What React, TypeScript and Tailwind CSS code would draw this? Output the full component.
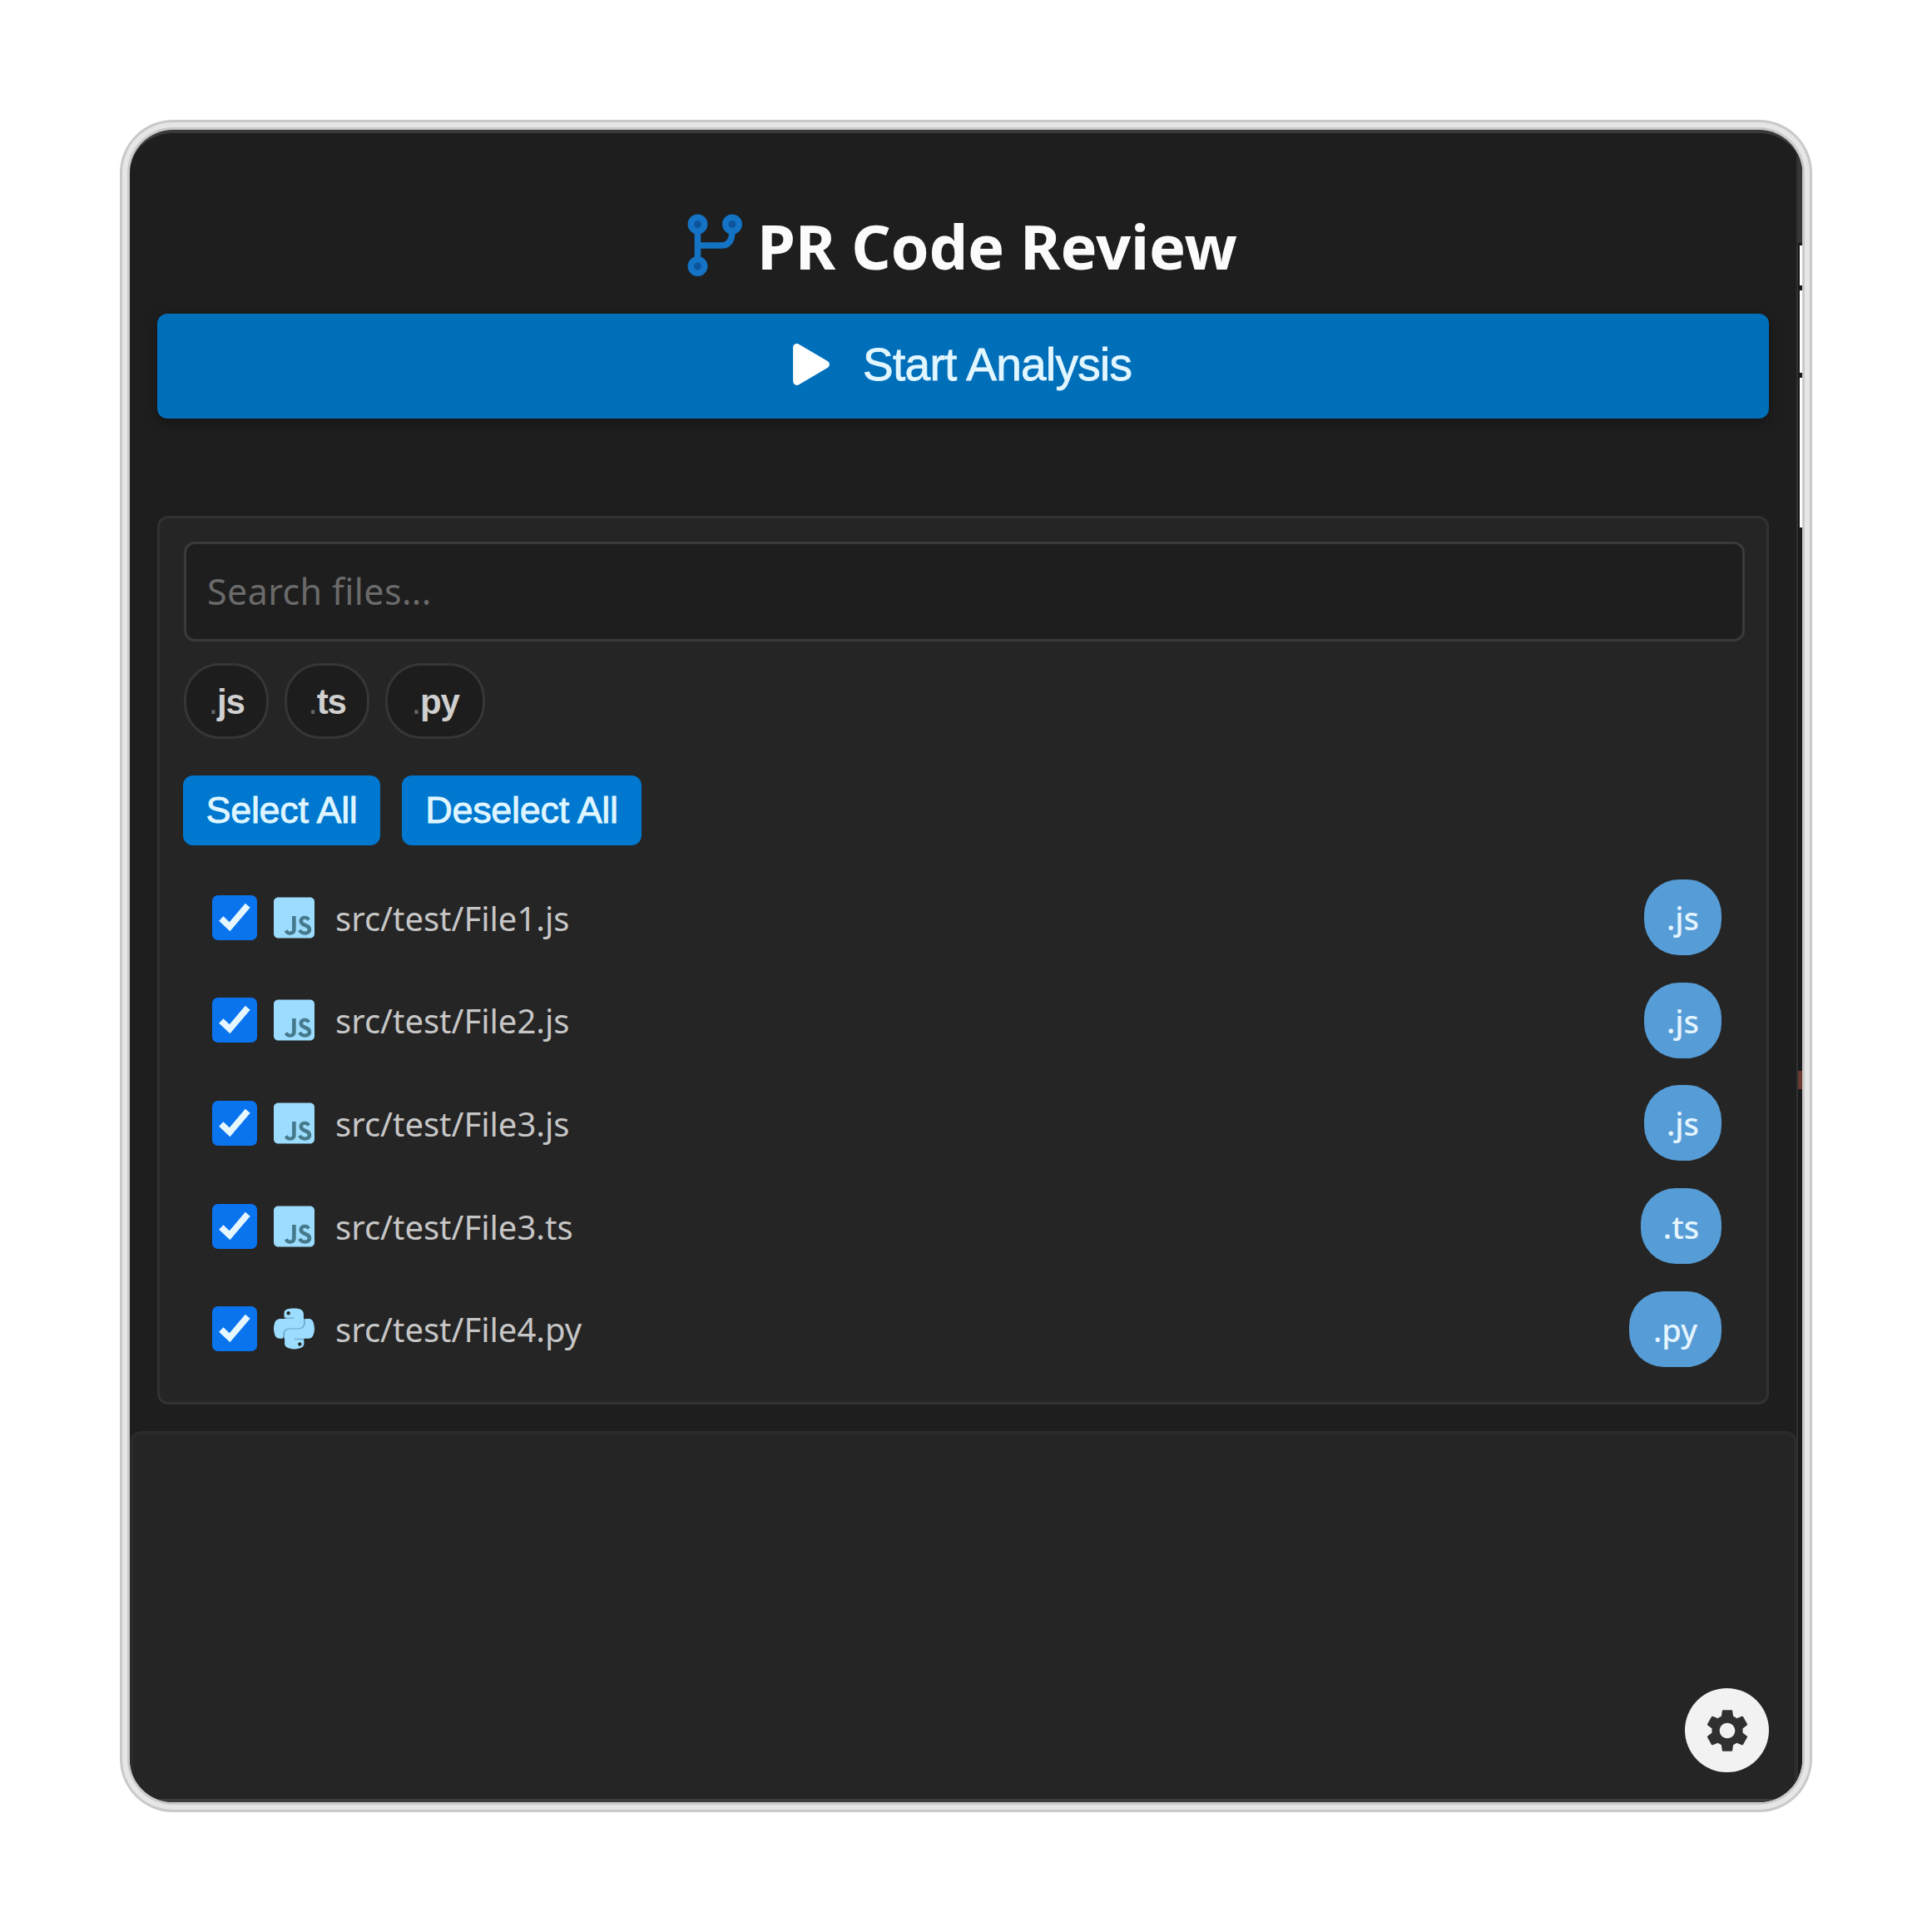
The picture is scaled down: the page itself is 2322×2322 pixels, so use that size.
import React from "react";
import { FaPlay, FaJsSquare, FaPython } from "react-icons/fa";
import { MdSettings } from "react-icons/md";

type FileRow = { path: string; ext: string };

const files: FileRow[] = [
  { path: "src/test/File1.js", ext: ".js" },
  { path: "src/test/File2.js", ext: ".js" },
  { path: "src/test/File3.js", ext: ".js" },
  { path: "src/test/File3.ts", ext: ".ts" },
  { path: "src/test/File4.py", ext: ".py" },
];

const chipWidths: Record<string, string> = {
  ".js": "w-[102px]",
  ".ts": "w-[102px]",
  ".py": "w-[120px]",
};

const badgeWidths: Record<string, string> = {
  ".js": "w-[93px]",
  ".ts": "w-[97px]",
  ".py": "w-[111px]",
};

function BranchIcon() {
  return (
    <svg viewBox="0 0 66 76" className="h-[76px] w-[66px] shrink-0" fill="none" stroke="#1473c4" strokeWidth="7.5">
      <circle cx="12.5" cy="12.5" r="8.2" fill="#0c559c" />
      <circle cx="54" cy="12.5" r="8.2" fill="#0c559c" />
      <circle cx="12.5" cy="63" r="8.2" fill="#0c559c" />
      <path d="M12.5 20.5V55M54 20.5C54 31 50.500 38 41 38H12.500" />
    </svg>
  );
}

function Header() {
  return (
    <header className="flex h-[221px] items-start pl-[670px] pt-[101px]">
      <BranchIcon />
      <h1 className="ml-[18px] whitespace-nowrap font-['Noto_Sans'] text-[74px] font-bold leading-[78px] tracking-[-0.2px] text-[#fbfbfb]">
        PR Code Review
      </h1>
    </header>
  );
}

function StartButton() {
  return (
    <button className="mx-[33px] flex h-[126px] w-[1937px] items-center rounded-[12px] bg-[#006fba] pb-[5px] pl-[764px] shadow-[0_4px_14px_rgba(0,0,0,0.35)]">
      <FaPlay className="h-[50px] w-[44px] text-white" />
      <span className="ml-[40px] whitespace-nowrap font-['Liberation_Sans'] text-[55px] leading-[60px] tracking-[-0.7px] text-[#e2f6ff] [-webkit-text-stroke:0.8px_#e2f6ff]">
        Start Analysis
      </span>
    </button>
  );
}

function FilterChip({ label }: { label: string }) {
  return (
    <span
      className={`${chipWidths[label]} flex h-[91px] items-center justify-center rounded-[43px] border-[3px] border-[#363634] bg-[#1d1d1d] pt-[2px] font-['Liberation_Sans'] text-[42px] font-bold tracking-[-1.2px] text-[#d0d0d0]`}
    >
      <span className="font-normal text-[#66666a]">.</span>
      {label.slice(1)}
    </span>
  );
}

function Checkbox() {
  return (
    <span className="flex size-[54px] shrink-0 items-center justify-center rounded-[7px] bg-[#0a74ef]">
      <svg viewBox="0 0 55 55" className="size-[54px]" fill="none">
        <path d="M11 28.5 L21.500 38.500 L43.500 12.500" stroke="#e6f7ff" strokeWidth="7.8" />
      </svg>
    </span>
  );
}

/* The backing square and disc tint the cut-out parts of each glyph. */
function LanguageIcon({ ext }: { ext: string }) {
  if (ext === ".py") {
    return (
      <span className="ml-[20px] flex size-[49px] shrink-0 items-center justify-center">
        <span className="flex size-[34px] items-center justify-center rounded-full bg-[#74b2d2]">
          <FaPython className="h-[56px] w-[49px] shrink-0 text-[#9cdcfe]" />
        </span>
      </span>
    );
  }
  return (
    <span className="ml-[20px] flex size-[49px] shrink-0 items-center justify-center">
      <span className="flex size-[46px] items-center justify-center bg-[#47798c]">
        <FaJsSquare className="h-[56px] w-[49px] shrink-0 text-[#9cdcfe]" />
      </span>
    </span>
  );
}

function FileItem({ file }: { file: FileRow }) {
  return (
    <li className="flex h-[123.6px] items-center pl-[63px] pr-[54px]">
      <Checkbox />
      <LanguageIcon ext={file.ext} />
      <span className="ml-[25px] grow whitespace-nowrap pt-[2px] font-['Noto_Sans'] text-[40px] leading-[54px] text-[#c6c6c6]">
        {file.path}
      </span>
      <span
        className={`${badgeWidths[file.ext]} flex h-[91px] items-center justify-center rounded-[42px] bg-[#569cd6] pt-[2px] font-['Noto_Sans'] text-[38px] font-medium text-[#e4f5ff]`}
      >
        {file.ext}
      </span>
    </li>
  );
}

function FilePanel() {
  return (
    <section className="mx-[33px] mt-[117px] h-[1068px] w-[1937px] rounded-[13px] border-[3px] border-[#323232] bg-[#252525]">
      <div className="ml-[29px] mt-[28px] flex h-[120px] w-[1876px] items-center rounded-[13px] border-[3px] border-[#3a3a3a] bg-[#1e1e1e] pl-[25px] font-['Noto_Sans'] text-[43px] tracking-[0.4px] text-[#6a6a6a]">
        Search files...
      </div>
      <div className="ml-[29px] mt-[26px] flex gap-[19px]">
        {[".js", ".ts", ".py"].map((ext) => (
          <FilterChip key={ext} label={ext} />
        ))}
      </div>
      <div className="ml-[28px] mt-[44px] flex gap-[26px] font-['Liberation_Sans'] text-[45px] tracking-[-0.3px] text-[#dff5ff] [-webkit-text-stroke:0.9px_#dff5ff]">
        <button className="h-[84px] w-[237px] whitespace-nowrap rounded-[12px] bg-[#0078d0]">Select All</button>
        <button className="h-[84px] w-[288px] whitespace-nowrap rounded-[12px] bg-[#0078d0]">Deselect All</button>
      </div>
      <ul className="mt-[25px]">
        {files.map((file) => (
          <FileItem key={file.path} file={file} />
        ))}
      </ul>
    </section>
  );
}

export default function App() {
  return (
    <main className="h-[2322px] w-[2322px] overflow-hidden bg-white p-[144px]">
      <div className="size-[2034px] rounded-[64px] bg-[#c9c9c9] p-[3px]">
        <div className="size-full rounded-[61px] bg-[#e6e6e6] p-[6px]">
          <div className="size-full rounded-[55px] bg-[#c9c9c9] p-[3px]">
            <div className="relative flex size-full flex-col overflow-hidden rounded-[52px] border-t-4 border-[#3a3a3a] bg-[#1e1e1e]">
              <div className="-mt-1 flex grow flex-col">
                <Header />
                <StartButton />
                <FilePanel />
                <section className="mt-[32px] flex w-[2004px] grow items-end justify-end rounded-t-[14px] border-x-[4px] border-b-[4px] border-t-[4px] border-[#2b2b2b] border-b-[#3c3c3c] bg-[#252525] pb-[32px] pr-[30px]">
                  <button className="flex size-[101px] items-center justify-center rounded-full bg-[#f2f2f2]">
                    <MdSettings className="size-[62px] text-[#303030]" />
                  </button>
                </section>
              </div>
              {/* Scrollbar gutter along the right edge */}
              <div className="absolute right-0 top-0 flex h-full w-[7px] flex-col border-l-2 border-[#303132] bg-[#181a1c]">
                <div className="h-[132px] bg-[#363736]" />
                <div className="ml-[2px] mt-[3px] h-[48px] bg-white" />
                <div className="ml-[2px] mt-[6px] h-[99px] bg-white" />
                <div className="ml-[2px] mt-[6px] h-[180px] bg-white" />
                <div className="mt-[653px] h-[22px] bg-[#6b3a30]" />
              </div>
            </div>
          </div>
        </div>
      </div>
    </main>
  );
}
